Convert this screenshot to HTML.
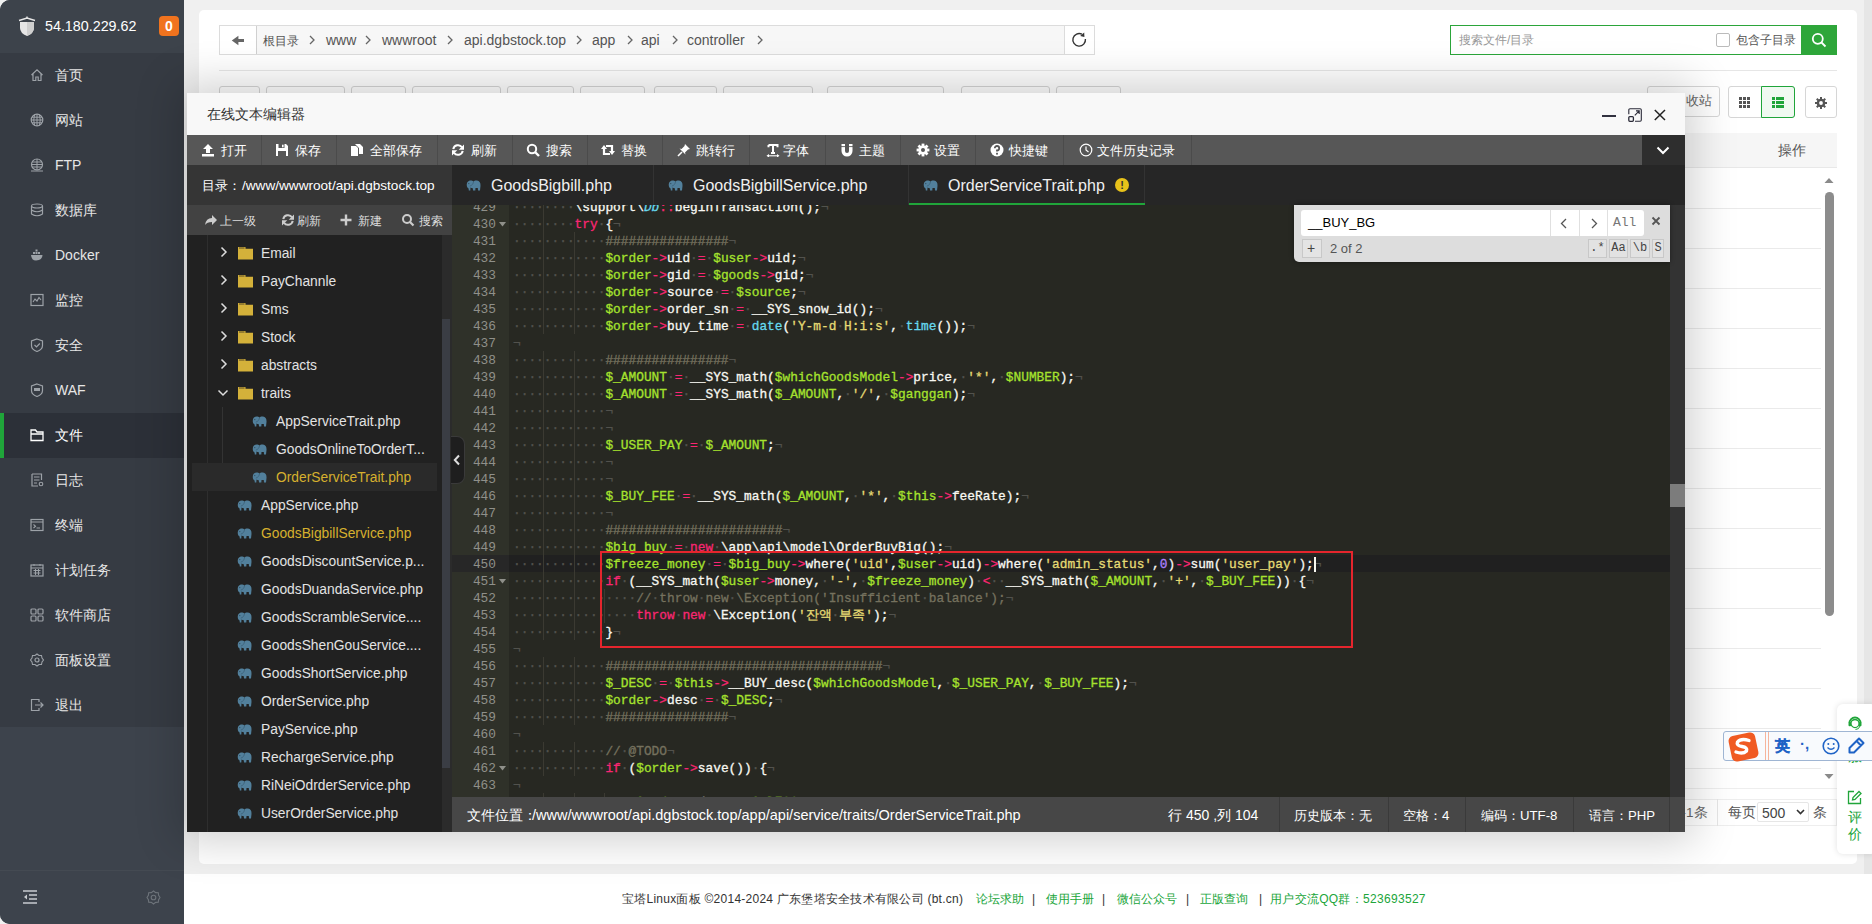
<!DOCTYPE html><html><head><meta charset="utf-8"><style>
*{box-sizing:border-box;margin:0;padding:0}
html,body{width:1872px;height:924px;overflow:hidden;background:#f0f0f0;font-family:"Liberation Sans",sans-serif;}
.a{position:absolute}
.sb{left:0;top:0;width:184px;height:924px;background:#363b43;border-radius:10px 0 0 10px;overflow:hidden}
.sbh{left:0;top:0;width:184px;height:53px;background:#3d434b}
.mi{left:0;width:184px;height:45px;color:#e6e6e6;font-size:14px;line-height:45px}
.mi .t{position:absolute;left:55px;top:0}
.mi svg{position:absolute;left:30px;top:15px}
.mi.act{background:#2c3038;color:#fff}
.mi.act:before{content:"";position:absolute;left:0;top:0;width:4px;height:45px;background:#20a53a}
.card{left:199px;top:10px;width:1658px;height:854px;background:#fff;border-radius:5px}
.btn{border:1px solid #d6d6d6;border-radius:3px;background:#fff}
.dlg{left:187px;top:93px;width:1498px;height:739px;background:#f8f8f8;box-shadow:0 0 40px 10px rgba(0,0,0,0.18)}
.tb{top:42px;left:0;width:1498px;height:30px;background:#575757}
.ti{top:42px;height:30px;color:#fff;font-size:13px;line-height:30px;border-right:1px solid #4b4b4b}
.mono{font-family:"Liberation Mono",monospace}
.cl{position:absolute;left:0;height:17px;line-height:17px;white-space:pre;font-size:12.83px;color:#f8f8f2;-webkit-text-stroke:0.3px}
.gn{position:absolute;left:0;width:57px;height:17px;line-height:17px;text-align:right;padding-right:13px;font-size:12.83px;color:#8f908a}
.k{color:#f92672}.v{color:#a6e22e}.s{color:#e6db74}.f{color:#66d9ef}.n{color:#ae81ff}.c{color:#75715e}
.iv{color:#52524d}
.tr{position:absolute;left:0;width:245px;height:28px;line-height:30px;font-size:13.8px;color:#e3e3e3;white-space:nowrap}
</style></head><body><div class="a sb">
<div class="a sbh"></div>
<svg class="a" style="left:18px;top:16px" width="18" height="20" viewBox="0 0 18 20">
<path d="M2 6 L16 6 L16 12 Q16 17 9 20 Q2 17 2 12 Z" fill="#e6e6e6"/>
<path d="M9 6 L16 6 L16 12 Q16 17 9 20 Z" fill="#cfcfcf"/>
<path d="M1 4.5 L9 2 L17 4.5" stroke="#e6e6e6" stroke-width="1.4" fill="none"/>
<path d="M9 0.5 V2.5" stroke="#e6e6e6" stroke-width="1.4"/>
</svg>
<div class="a" style="left:45px;top:17px;font-size:14.3px;line-height:18px;color:#fff">54.180.229.62</div>
<div class="a" style="left:159px;top:16px;width:20px;height:20px;border-radius:4px;background:#f0731e;color:#fff;font-size:14px;font-weight:bold;line-height:20px;text-align:center">0</div>
<div class="a mi" style="top:53px"><svg width="14" height="14" viewBox="0 0 14 14"><path d="M1.5 7 L7 1.8 L12.5 7 M3 5.8 V12.5 H5.8 V9 H8.2 V12.5 H11 V5.8" stroke="#9da2a8" stroke-width="1.2" fill="none"/></svg><span class="t">首页</span></div>
<div class="a mi" style="top:98px"><svg width="14" height="14" viewBox="0 0 14 14"><circle cx="7" cy="7" r="5.8" stroke="#9da2a8" stroke-width="1.2" fill="none"/><path d="M1.2 7 H12.8 M7 1.2 V12.8 M2 4.2 H12 M2 9.8 H12 M4.5 1.8 Q3 7 4.5 12.2 M9.5 1.8 Q11 7 9.5 12.2" stroke="#9da2a8" stroke-width="1" fill="none"/></svg><span class="t">网站</span></div>
<div class="a mi" style="top:143px"><svg width="14" height="14" viewBox="0 0 14 14"><circle cx="7" cy="6.5" r="5.5" stroke="#9da2a8" stroke-width="1.2" fill="none"/><path d="M1.5 6.5 H12.5 M7 1 V12 M2 4 H12 M2 9 H12 M1 13 H13" stroke="#9da2a8" stroke-width="1" fill="none"/></svg><span class="t">FTP</span></div>
<div class="a mi" style="top:188px"><svg width="14" height="14" viewBox="0 0 14 14"><ellipse cx="7" cy="3" rx="5.5" ry="2" stroke="#9da2a8" stroke-width="1.2" fill="none"/><path d="M1.5 3 V11 Q7 14.5 12.5 11 V3 M1.5 7 Q7 10.5 12.5 7" stroke="#9da2a8" stroke-width="1.2" fill="none"/></svg><span class="t">数据库</span></div>
<div class="a mi" style="top:233px"><svg width="14" height="14" viewBox="0 0 14 14"><path d="M1 7 H12.5 Q12.5 12 6 12.5 Q1.5 12.5 1 7 Z" fill="#9da2a8"/><rect x="3" y="4" width="2" height="2" fill="#9da2a8"/><rect x="5.5" y="4" width="2" height="2" fill="#9da2a8"/><rect x="5.5" y="1.5" width="2" height="2" fill="#9da2a8"/><rect x="8" y="4" width="2" height="2" fill="#9da2a8"/></svg><span class="t">Docker</span></div>
<div class="a mi" style="top:278px"><svg width="14" height="14" viewBox="0 0 14 14"><rect x="1" y="1.5" width="12" height="11" stroke="#9da2a8" stroke-width="1.2" fill="none"/><path d="M3 9 L5 6 L7 8 L9 4.5 L11 7" stroke="#9da2a8" stroke-width="1.1" fill="none"/></svg><span class="t">监控</span></div>
<div class="a mi" style="top:323px"><svg width="14" height="14" viewBox="0 0 14 14"><path d="M7 1 L12.5 3 V7.5 Q12.5 11.5 7 13.5 Q1.5 11.5 1.5 7.5 V3 Z" stroke="#9da2a8" stroke-width="1.2" fill="none"/><path d="M4.5 7 L6.5 9 L9.8 5.5" stroke="#9da2a8" stroke-width="1.2" fill="none"/></svg><span class="t">安全</span></div>
<div class="a mi" style="top:368px"><svg width="14" height="14" viewBox="0 0 14 14"><path d="M7 1 L12.5 3 V7.5 Q12.5 11.5 7 13.5 Q1.5 11.5 1.5 7.5 V3 Z" stroke="#9da2a8" stroke-width="1.2" fill="none"/><path d="M4 5 H10 V8 H4 Z" fill="#9da2a8"/></svg><span class="t">WAF</span></div>
<div class="a mi act" style="top:413px"><svg width="14" height="14" viewBox="0 0 14 14"><path d="M1 2 H5.5 L7 4 H13 V12.5 H1 Z M1 6 H13" stroke="#fff" stroke-width="1.3" fill="none"/></svg><span class="t">文件</span></div>
<div class="a mi" style="top:458px"><svg width="14" height="14" viewBox="0 0 14 14"><path d="M2 1 H11.5 V7 M2 1 V13 H8 M4 4 H9.5 M4 7 H9.5 M4 10 H7" stroke="#9da2a8" stroke-width="1.2" fill="none"/><circle cx="11" cy="11" r="1.8" stroke="#9da2a8" stroke-width="1.1" fill="none"/></svg><span class="t">日志</span></div>
<div class="a mi" style="top:503px"><svg width="14" height="14" viewBox="0 0 14 14"><rect x="1" y="1.5" width="12" height="11" stroke="#9da2a8" stroke-width="1.2" fill="none"/><path d="M1 4 H13 M3.5 6.5 L5.5 8.2 L3.5 10 M6.5 10 H10" stroke="#9da2a8" stroke-width="1.1" fill="none"/></svg><span class="t">终端</span></div>
<div class="a mi" style="top:548px"><svg width="14" height="14" viewBox="0 0 14 14"><rect x="1" y="2" width="12" height="11" stroke="#9da2a8" stroke-width="1.2" fill="none"/><path d="M1 5 H13 M4 1 V3 M10 1 V3 M3.5 7.5 H10.5 M3.5 10 H10.5 M5.5 6 V12 M8.5 6 V12" stroke="#9da2a8" stroke-width="1" fill="none"/></svg><span class="t">计划任务</span></div>
<div class="a mi" style="top:593px"><svg width="14" height="14" viewBox="0 0 14 14"><rect x="1" y="1" width="5" height="5" rx="1" stroke="#9da2a8" stroke-width="1.2" fill="none"/><rect x="8" y="1" width="5" height="5" rx="1" stroke="#9da2a8" stroke-width="1.2" fill="none"/><rect x="1" y="8" width="5" height="5" rx="1" stroke="#9da2a8" stroke-width="1.2" fill="none"/><rect x="8" y="8" width="5" height="5" rx="1" stroke="#9da2a8" stroke-width="1.2" fill="none"/></svg><span class="t">软件商店</span></div>
<div class="a mi" style="top:638px"><svg width="14" height="14" viewBox="0 0 14 14"><circle cx="7" cy="7" r="2" stroke="#9da2a8" stroke-width="1.2" fill="none"/><path d="M7 1 L9 2.5 L11.5 2.5 L12 5 L13.5 7 L12 9 L11.5 11.5 L9 11.5 L7 13 L5 11.5 L2.5 11.5 L2 9 L0.5 7 L2 5 L2.5 2.5 L5 2.5 Z" stroke="#9da2a8" stroke-width="1.1" fill="none"/></svg><span class="t">面板设置</span></div>
<div class="a mi" style="top:683px"><svg width="14" height="14" viewBox="0 0 14 14"><path d="M9 4 V1.5 H1.5 V12.5 H9 V10 M5 7 H13 M10.5 4.5 L13 7 L10.5 9.5" stroke="#9da2a8" stroke-width="1.2" fill="none"/></svg><span class="t">退出</span></div>
<div class="a" style="left:0;top:727px;width:184px;height:197px;background:#3d434c"></div>
<div class="a" style="left:0;top:870px;width:184px;height:1px;background:#444a52"></div>
<svg class="a" style="left:23px;top:890px" width="15" height="14" viewBox="0 0 15 14"><path d="M0 1 H14 M6 5 H14 M6 9 H14 M0 13 H14" stroke="#c8cbcf" stroke-width="1.3"/><path d="M4 4.5 L1 7 L4 9.5 Z" fill="#c8cbcf"/></svg>
<svg class="a" style="left:146px;top:890px" width="15" height="15" viewBox="0 0 15 15"><circle cx="7.5" cy="7.5" r="2.3" stroke="#6d737a" stroke-width="1.1" fill="none"/><path d="M7.5 1 L9.7 2.6 L12.3 2.7 L12.6 5.3 L14 7.5 L12.6 9.7 L12.3 12.3 L9.7 12.4 L7.5 14 L5.3 12.4 L2.7 12.3 L2.4 9.7 L1 7.5 L2.4 5.3 L2.7 2.7 L5.3 2.6 Z" stroke="#6d737a" stroke-width="1.1" fill="none"/></svg>
</div>
<div class="a" style="left:184px;top:874px;width:1688px;height:50px;background:#fff"></div>
<div class="a" style="left:622px;top:891px;font-size:12px;letter-spacing:0.25px;line-height:16px;color:#333;white-space:nowrap">宝塔Linux面板 ©2014-2024 广东堡塔安全技术有限公司 (bt.cn)</div>
<div class="a" style="left:976px;top:891px;font-size:12px;line-height:16px;color:#20a53a;white-space:nowrap">论坛求助</div>
<div class="a" style="left:1032px;top:891px;font-size:12px;line-height:16px;color:#333;white-space:nowrap">|</div>
<div class="a" style="left:1046px;top:891px;font-size:12px;line-height:16px;color:#20a53a;white-space:nowrap">使用手册</div>
<div class="a" style="left:1102px;top:891px;font-size:12px;line-height:16px;color:#333;white-space:nowrap">|</div>
<div class="a" style="left:1117px;top:891px;font-size:12px;line-height:16px;color:#20a53a;white-space:nowrap">微信公众号</div>
<div class="a" style="left:1186px;top:891px;font-size:12px;line-height:16px;color:#333;white-space:nowrap">|</div>
<div class="a" style="left:1200px;top:891px;font-size:12px;line-height:16px;color:#20a53a;white-space:nowrap">正版查询</div>
<div class="a" style="left:1259px;top:891px;font-size:12px;line-height:16px;color:#333;white-space:nowrap">|</div>
<div class="a" style="left:1270px;top:891px;font-size:12px;letter-spacing:0.3px;line-height:16px;color:#20a53a;white-space:nowrap">用户交流QQ群：523693527</div>
<div class="a" style="left:1864px;top:0;width:8px;height:874px;background:#e6e6e6"></div>
<div class="a card"></div>
<div class="a" style="left:219px;top:25px;width:876px;height:30px;border:1px solid #dcdcdc;background:#f7f7f7"></div>
<div class="a" style="left:220px;top:26px;width:37px;height:28px;background:#fff;border-right:1px solid #d0d0d0"></div>
<svg class="a" style="left:231px;top:34px" width="14" height="12" viewBox="0 0 14 12"><path d="M0.8 6.5 L7.4 1.8 V5 H13 V8 H7.4 V11.2 Z" fill="#666"/></svg>
<div class="a" style="left:263px;top:32px;font-size:12px;top:33px;line-height:16px;color:#555;white-space:nowrap">根目录</div>
<div class="a" style="left:326px;top:32px;font-size:14px;line-height:16px;color:#555;white-space:nowrap">www</div>
<div class="a" style="left:382px;top:32px;font-size:14px;line-height:16px;color:#555;white-space:nowrap">wwwroot</div>
<div class="a" style="left:464px;top:32px;font-size:14px;line-height:16px;color:#555;white-space:nowrap">api.dgbstock.top</div>
<div class="a" style="left:592px;top:32px;font-size:14px;line-height:16px;color:#555;white-space:nowrap">app</div>
<div class="a" style="left:641px;top:32px;font-size:14px;line-height:16px;color:#555;white-space:nowrap">api</div>
<div class="a" style="left:687px;top:32px;font-size:14px;line-height:16px;color:#555;white-space:nowrap">controller</div>
<svg class="a" style="left:308.5px;top:35px" width="6" height="10" viewBox="0 0 6 10"><path d="M1 1 L5 5 L1 9" stroke="#666" stroke-width="1.3" fill="none"/></svg>
<svg class="a" style="left:365px;top:35px" width="6" height="10" viewBox="0 0 6 10"><path d="M1 1 L5 5 L1 9" stroke="#666" stroke-width="1.3" fill="none"/></svg>
<svg class="a" style="left:447px;top:35px" width="6" height="10" viewBox="0 0 6 10"><path d="M1 1 L5 5 L1 9" stroke="#666" stroke-width="1.3" fill="none"/></svg>
<svg class="a" style="left:576px;top:35px" width="6" height="10" viewBox="0 0 6 10"><path d="M1 1 L5 5 L1 9" stroke="#666" stroke-width="1.3" fill="none"/></svg>
<svg class="a" style="left:627px;top:35px" width="6" height="10" viewBox="0 0 6 10"><path d="M1 1 L5 5 L1 9" stroke="#666" stroke-width="1.3" fill="none"/></svg>
<svg class="a" style="left:672px;top:35px" width="6" height="10" viewBox="0 0 6 10"><path d="M1 1 L5 5 L1 9" stroke="#666" stroke-width="1.3" fill="none"/></svg>
<svg class="a" style="left:756.5px;top:35px" width="6" height="10" viewBox="0 0 6 10"><path d="M1 1 L5 5 L1 9" stroke="#666" stroke-width="1.3" fill="none"/></svg>
<div class="a" style="left:1064px;top:25px;width:31px;height:30px;border:1px solid #dcdcdc;background:#fff"></div>
<svg class="a" style="left:1071px;top:32px" width="16" height="16" viewBox="0 0 16 16"><path d="M14.4 7 A6.3 6.3 0 1 1 11 2.2" stroke="#333" stroke-width="1.4" fill="none"/><path d="M13.2 0.6 L13.4 5 L9.2 4 Z" fill="#333"/></svg>
<div class="a" style="left:1450px;top:25px;width:353px;height:30px;border:1px solid #2ba53a;background:#fff"></div>
<div class="a" style="left:1459px;top:33px;font-size:12px;line-height:15px;color:#999">搜索文件/目录</div>
<div class="a" style="left:1716px;top:33px;width:14px;height:14px;border:1px solid #bbb;border-radius:2px;background:#fff"></div>
<div class="a" style="left:1736px;top:33px;font-size:12px;line-height:15px;color:#555">包含子目录</div>
<div class="a" style="left:1801px;top:25px;width:36px;height:30px;background:#2ea63a"></div>
<svg class="a" style="left:1811px;top:32px" width="16" height="16" viewBox="0 0 16 16"><circle cx="6.8" cy="6.8" r="5" stroke="#fff" stroke-width="1.8" fill="none"/><path d="M10.5 10.5 L14.5 14.5" stroke="#fff" stroke-width="1.8"/></svg>
<div class="a" style="left:219px;top:70px;width:1618px;height:1px;background:#e6e6e6"></div>
<div class="a btn" style="left:219px;top:86px;width:41px;height:31px"></div>
<div class="a btn" style="left:266px;top:86px;width:79px;height:31px"></div>
<div class="a btn" style="left:351px;top:86px;width:55px;height:31px"></div>
<div class="a btn" style="left:412px;top:86px;width:89px;height:31px"></div>
<div class="a btn" style="left:507px;top:86px;width:67px;height:31px"></div>
<div class="a btn" style="left:580px;top:86px;width:65px;height:31px"></div>
<div class="a btn" style="left:654px;top:86px;width:63px;height:31px"></div>
<div class="a btn" style="left:723px;top:86px;width:90px;height:31px"></div>
<div class="a btn" style="left:827px;top:86px;width:117px;height:31px"></div>
<div class="a btn" style="left:961px;top:86px;width:89px;height:31px"></div>
<div class="a btn" style="left:1056px;top:86px;width:65px;height:31px"></div>
<div class="a btn" style="left:1647px;top:86px;width:73px;height:31px"></div>
<div class="a" style="left:1686px;top:93px;font-size:13px;line-height:16px;color:#666">收站</div>
<div class="a btn" style="left:1728px;top:86px;width:67px;height:32px"></div>
<div class="a" style="left:1761px;top:86px;width:34px;height:32px;border:1px solid #20a53a;background:#f0f9f1;border-radius:0 3px 3px 0"></div>
<svg class="a" style="left:1739px;top:97px" width="11" height="11" viewBox="0 0 11 11"><g fill="#555"><rect x="0" y="0" width="3" height="3"/><rect x="4" y="0" width="3" height="3"/><rect x="8" y="0" width="3" height="3"/><rect x="0" y="4" width="3" height="3"/><rect x="4" y="4" width="3" height="3"/><rect x="8" y="4" width="3" height="3"/><rect x="0" y="8" width="3" height="3"/><rect x="4" y="8" width="3" height="3"/><rect x="8" y="8" width="3" height="3"/></g></svg>
<svg class="a" style="left:1772px;top:97px" width="12" height="11" viewBox="0 0 12 11"><g fill="#20a53a"><rect x="0" y="0" width="3" height="3"/><rect x="4" y="0" width="8" height="3"/><rect x="0" y="4" width="3" height="3"/><rect x="4" y="4" width="8" height="3"/><rect x="0" y="8" width="3" height="3"/><rect x="4" y="8" width="8" height="3"/></g></svg>
<div class="a btn" style="left:1805px;top:86px;width:32px;height:32px"></div>
<svg class="a" style="left:1815px;top:97px" width="12" height="12" viewBox="0 0 12 12"><g fill="#555"><circle cx="6" cy="6" r="4.3"/><rect x="5" y="0" width="2" height="12"/><rect x="0" y="5" width="12" height="2"/><rect x="5" y="0" width="2" height="12" transform="rotate(45 6 6)"/><rect x="5" y="0" width="2" height="12" transform="rotate(-45 6 6)"/></g><circle cx="6" cy="6" r="1.9" fill="#fff"/></svg>
<div class="a" style="left:219px;top:133px;width:1618px;height:35px;background:#f6f6f6;border-bottom:1px solid #e8e8e8"></div>
<div class="a" style="left:1778px;top:143px;font-size:13.5px;line-height:16px;color:#555">操作</div>
<div class="a" style="left:219px;top:208px;width:1602px;height:1px;background:#eaeaea"></div>
<div class="a" style="left:219px;top:248px;width:1602px;height:1px;background:#eaeaea"></div>
<div class="a" style="left:219px;top:288px;width:1602px;height:1px;background:#eaeaea"></div>
<div class="a" style="left:219px;top:328px;width:1602px;height:1px;background:#eaeaea"></div>
<div class="a" style="left:219px;top:368px;width:1602px;height:1px;background:#eaeaea"></div>
<div class="a" style="left:219px;top:408px;width:1602px;height:1px;background:#eaeaea"></div>
<div class="a" style="left:219px;top:448px;width:1602px;height:1px;background:#eaeaea"></div>
<div class="a" style="left:219px;top:488px;width:1602px;height:1px;background:#eaeaea"></div>
<div class="a" style="left:219px;top:528px;width:1602px;height:1px;background:#eaeaea"></div>
<div class="a" style="left:219px;top:568px;width:1602px;height:1px;background:#eaeaea"></div>
<div class="a" style="left:219px;top:608px;width:1602px;height:1px;background:#eaeaea"></div>
<div class="a" style="left:219px;top:648px;width:1602px;height:1px;background:#eaeaea"></div>
<div class="a" style="left:219px;top:688px;width:1602px;height:1px;background:#eaeaea"></div>
<div class="a" style="left:219px;top:728px;width:1602px;height:1px;background:#eaeaea"></div>
<div class="a" style="left:219px;top:768px;width:1602px;height:1px;background:#eaeaea"></div>
<svg class="a" style="left:1823px;top:176px" width="12" height="8" viewBox="0 0 12 8"><path d="M1.5 7 L6 2 L10.5 7 Z" fill="#8a8a8a"/></svg>
<div class="a" style="left:1825px;top:192px;width:9px;height:424px;border-radius:5px;background:#8c8c8c"></div>
<svg class="a" style="left:1823px;top:773px" width="12" height="8" viewBox="0 0 12 8"><path d="M1.5 1 L6 6 L10.5 1 Z" fill="#8a8a8a"/></svg>
<div class="a" style="left:219px;top:788px;width:1618px;height:1px;background:#eee"></div>
<div class="a" style="left:1680px;top:799px;width:157px;height:27px;border:1px solid #eee;border-left:none"></div>
<div class="a" style="left:1717px;top:799px;width:1px;height:27px;background:#e6e6e6"></div>
<div class="a" style="left:1672px;top:805px;font-size:13.5px;line-height:16px;color:#666;white-space:nowrap">共1条</div>
<div class="a" style="left:1728px;top:805px;font-size:13.5px;line-height:16px;color:#555">每页</div>
<div class="a" style="left:1757px;top:802px;width:52px;height:20px;border:1px solid #e6e6e6;border-radius:2px;background:#fff"></div>
<div class="a" style="left:1762px;top:805px;font-size:14px;line-height:16px;color:#444">500</div>
<svg class="a" style="left:1796px;top:809px" width="9" height="6" viewBox="0 0 9 6"><path d="M1 1 L4.5 4.5 L8 1" stroke="#333" stroke-width="1.6" fill="none"/></svg>
<div class="a" style="left:1813px;top:805px;font-size:13.5px;line-height:16px;color:#555">条</div>
<div class="a dlg">
<div class="a" style="left:20px;top:12px;font-size:14px;line-height:18px;color:#333">在线文本编辑器</div>
<svg class="a" style="left:1414px;top:14px" width="66" height="16" viewBox="0 0 66 16"><path d="M1 9 H15" stroke="#1a1a2a" stroke-width="1.8"/><path d="M27.8 7.2 V3 Q27.8 1.8 29 1.8 H39.1 Q40.3 1.8 40.3 3 V13.1 Q40.3 14.3 39.1 14.3 H34" stroke="#2a2a38" stroke-width="1.1" fill="none"/><rect x="27.8" y="9.6" width="4.6" height="4.7" rx="1" stroke="#2a2a38" stroke-width="1.3" fill="none"/><path d="M33.8 8.3 L38 4.1 M35 3.9 H38.2 V7.1" stroke="#2a2a38" stroke-width="1.1" fill="none"/><path d="M53.8 3 L64 13 M64 3 L53.8 13" stroke="#222" stroke-width="1.5"/></svg>
<div class="a tb"></div>
<div class="a" style="left:1455px;top:42px;width:43px;height:30px;background:#2e2e2e"></div>
<svg class="a" style="left:1469px;top:53px" width="14" height="9" viewBox="0 0 14 9"><path d="M1.5 1.5 L7 7 L12.5 1.5" stroke="#fff" stroke-width="2" fill="none"/></svg>
<div class="a ti" style="left:0px;width:75px"><svg class="a" style="left:14px;top:8px" width="14" height="14" viewBox="0 0 14 14"><path d="M7 1 L12 6 H9 V10 H5 V6 H2 Z" fill="#fff"/><rect x="1" y="11" width="12" height="2.5" fill="#fff"/></svg><span class="a" style="left:34px;top:1px">打开</span></div>
<div class="a ti" style="left:74px;width:76px"><svg class="a" style="left:14px;top:8px" width="14" height="14" viewBox="0 0 14 14"><path d="M1 1 H11 L13 3 V13 H1 Z" fill="#fff"/><rect x="3.5" y="1" width="6" height="4" fill="#575757"/><rect x="7" y="1.7" width="1.6" height="2.6" fill="#fff"/><rect x="3" y="8" width="8" height="5" fill="#575757"/></svg><span class="a" style="left:34px;top:1px">保存</span></div>
<div class="a ti" style="left:149px;width:102px"><svg class="a" style="left:14px;top:8px" width="14" height="14" viewBox="0 0 14 14"><path d="M1 3 H6 L8 5 V13 H1 Z" fill="#fff"/><path d="M5 1 H10 L13 4 V11 H9 V5 L6.5 2.5 Z" fill="#fff"/></svg><span class="a" style="left:34px;top:1px">全部保存</span></div>
<div class="a ti" style="left:250px;width:76px"><svg class="a" style="left:14px;top:8px" width="14" height="14" viewBox="0 0 14 14"><path d="M2.3 6.2 A4.8 4.8 0 0 1 11 4.3 M11.7 7.8 A4.8 4.8 0 0 1 3 9.7" stroke="#fff" stroke-width="2" fill="none"/><path d="M13 1.5 V6.8 H7.7 Z M1 12.5 V7.2 H6.3 Z" fill="#fff"/></svg><span class="a" style="left:34px;top:1px">刷新</span></div>
<div class="a ti" style="left:325px;width:76px"><svg class="a" style="left:14px;top:8px" width="14" height="14" viewBox="0 0 14 14"><circle cx="6" cy="6" r="4.2" stroke="#fff" stroke-width="2" fill="none"/><path d="M9 9 L13 13" stroke="#fff" stroke-width="2.4"/></svg><span class="a" style="left:34px;top:1px">搜索</span></div>
<div class="a ti" style="left:400px;width:76px"><svg class="a" style="left:14px;top:8px" width="14" height="14" viewBox="0 0 14 14"><path d="M3 5 V11 H9 M11 9 V3 H5" stroke="#fff" stroke-width="2.2" fill="none"/><path d="M0 6 L3 2 L6 6 Z M8 8 L11 12 L14 8 Z" fill="#fff"/></svg><span class="a" style="left:34px;top:1px">替换</span></div>
<div class="a ti" style="left:475px;width:88px"><svg class="a" style="left:15px;top:8px" width="14" height="14" viewBox="0 0 14 14"><path d="M8 1 L13 6 L11 6.5 L8 9.5 L8.5 11.5 L2.5 5.5 L4.5 6 L7.5 3 Z" fill="#fff"/><path d="M5 9 L1 13" stroke="#fff" stroke-width="1.6"/></svg><span class="a" style="left:34px;top:1px">跳转行</span></div>
<div class="a ti" style="left:562px;width:77px"><svg class="a" style="left:17px;top:8px" width="14" height="14" viewBox="0 0 14 14"><path d="M2.5 2 H11.5 V4.2 M2.5 2 V4.2 M7 2 V10 M5 10 H9" stroke="#fff" stroke-width="2" fill="none"/><path d="M2.5 12.8 H11.5" stroke="#fff" stroke-width="1.1"/><path d="M0.5 12.8 L3 11 V14.6 Z M13.5 12.8 L11 11 V14.6 Z" fill="#fff"/></svg><span class="a" style="left:34px;top:1px">字体</span></div>
<div class="a ti" style="left:638px;width:76px"><svg class="a" style="left:15px;top:8px" width="14" height="14" viewBox="0 0 14 14"><path d="M1.5 1 H5 V8 A2 2 0 0 0 9 8 V1 H12.5 V8 A5.5 5.5 0 0 1 1.5 8 Z" fill="#fff"/><path d="M1 3.6 H5.5 M8.5 3.6 H13" stroke="#575757" stroke-width="0.9"/></svg><span class="a" style="left:34px;top:1px">主题</span></div>
<div class="a ti" style="left:713px;width:76px"><svg class="a" style="left:16px;top:8px" width="14" height="14" viewBox="0 0 14 14"><g fill="#fff"><circle cx="7" cy="7" r="4.6"/><rect x="5.6" y="0.6" width="2.8" height="12.8"/><rect x="0.6" y="5.6" width="12.8" height="2.8"/><rect x="5.6" y="0.6" width="2.8" height="12.8" transform="rotate(45 7 7)"/><rect x="5.6" y="0.6" width="2.8" height="12.8" transform="rotate(-45 7 7)"/></g><circle cx="7" cy="7" r="2" fill="#575757"/></svg><span class="a" style="left:34px;top:1px">设置</span></div>
<div class="a ti" style="left:788px;width:89px"><svg class="a" style="left:15px;top:8px" width="14" height="14" viewBox="0 0 14 14"><circle cx="7" cy="7" r="6.5" fill="#fff"/><path d="M4.8 5.2 A2.2 2.2 0 1 1 7 7.4 V8.6" stroke="#575757" stroke-width="1.8" fill="none"/><rect x="6.1" y="9.8" width="1.8" height="1.8" fill="#575757"/></svg><span class="a" style="left:34px;top:1px">快捷键</span></div>
<div class="a ti" style="left:876px;width:129px"><svg class="a" style="left:16px;top:8px" width="14" height="14" viewBox="0 0 14 14"><circle cx="7" cy="7" r="5.8" stroke="#fff" stroke-width="1.2" fill="none"/><path d="M7 3.5 V7 L9.5 9" stroke="#fff" stroke-width="1.2" fill="none"/></svg><span class="a" style="left:34px;top:1px">文件历史记录</span></div>
<div class="a" style="left:0;top:72px;width:265px;height:40px;background:#353535"></div>
<div class="a" style="left:15px;top:85px;font-size:12.5px;line-height:16px;color:#fff;white-space:nowrap">目录：</div>
<div class="a" style="left:55px;top:85px;font-size:13.6px;line-height:16px;color:#fff;white-space:nowrap">/www/wwwroot/api.dgbstock.top</div>
<div class="a" style="left:0;top:112px;width:265px;height:30px;background:#424242"></div>
<svg class="a" style="left:17px;top:120px" width="14" height="14" viewBox="0 0 14 14"><path d="M1 12 Q2 5 8 5 V2 L13 7 L8 12 V9 Q3 9 1 12 Z" fill="#ccc"/></svg>
<div class="a" style="left:33px;top:120px;font-size:12px;line-height:16px;color:#ddd">上一级</div>
<svg class="a" style="left:94px;top:120px" width="14" height="14" viewBox="0 0 14 14"><path d="M2.3 6.2 A4.8 4.8 0 0 1 11 4.3 M11.7 7.8 A4.8 4.8 0 0 1 3 9.7" stroke="#ccc" stroke-width="2" fill="none"/><path d="M13 1.5 V6.8 H7.7 Z M1 12.5 V7.2 H6.3 Z" fill="#ccc"/></svg>
<div class="a" style="left:110px;top:120px;font-size:12px;line-height:16px;color:#ddd">刷新</div>
<svg class="a" style="left:152px;top:120px" width="14" height="14" viewBox="0 0 14 14"><path d="M7 1.5 V12.5 M1.5 7 H12.5" stroke="#ccc" stroke-width="2.4"/></svg>
<div class="a" style="left:171px;top:120px;font-size:12px;line-height:16px;color:#ddd">新建</div>
<svg class="a" style="left:214px;top:120px" width="14" height="14" viewBox="0 0 14 14"><circle cx="6" cy="6" r="4" stroke="#ccc" stroke-width="2" fill="none"/><path d="M9 9 L12.5 12.5" stroke="#ccc" stroke-width="2.2"/></svg>
<div class="a" style="left:232px;top:120px;font-size:12px;line-height:16px;color:#ddd">搜索</div>
<div class="a" style="left:0;top:142px;width:265px;height:597px;background:#212121;overflow:hidden">
<div class="a" style="left:20px;top:0;width:1px;height:597px;background:#2e2e2e"></div>
<div class="a" style="left:35px;top:172px;width:1px;height:84px;background:#333"></div>
<svg class="a" style="left:33px;top:11px" width="8" height="12" viewBox="0 0 8 12"><path d="M1.5 1.5 L6 6 L1.5 10.5" stroke="#ddd" stroke-width="1.5" fill="none"/></svg>
<svg class="a" style="left:51px;top:12px" width="15" height="13" viewBox="0 0 15 13"><path d="M0 0 H7.5 V1.8 H15 V12.5 H0 Z" fill="#d4b13a"/><path d="M1 1 H6.5" stroke="#3a3020" stroke-width="0.8"/></svg>
<div class="tr" style="left:74px;top:4px">Email</div>
<svg class="a" style="left:33px;top:39px" width="8" height="12" viewBox="0 0 8 12"><path d="M1.5 1.5 L6 6 L1.5 10.5" stroke="#ddd" stroke-width="1.5" fill="none"/></svg>
<svg class="a" style="left:51px;top:40px" width="15" height="13" viewBox="0 0 15 13"><path d="M0 0 H7.5 V1.8 H15 V12.5 H0 Z" fill="#d4b13a"/><path d="M1 1 H6.5" stroke="#3a3020" stroke-width="0.8"/></svg>
<div class="tr" style="left:74px;top:32px">PayChannle</div>
<svg class="a" style="left:33px;top:67px" width="8" height="12" viewBox="0 0 8 12"><path d="M1.5 1.5 L6 6 L1.5 10.5" stroke="#ddd" stroke-width="1.5" fill="none"/></svg>
<svg class="a" style="left:51px;top:68px" width="15" height="13" viewBox="0 0 15 13"><path d="M0 0 H7.5 V1.8 H15 V12.5 H0 Z" fill="#d4b13a"/><path d="M1 1 H6.5" stroke="#3a3020" stroke-width="0.8"/></svg>
<div class="tr" style="left:74px;top:60px">Sms</div>
<svg class="a" style="left:33px;top:95px" width="8" height="12" viewBox="0 0 8 12"><path d="M1.5 1.5 L6 6 L1.5 10.5" stroke="#ddd" stroke-width="1.5" fill="none"/></svg>
<svg class="a" style="left:51px;top:96px" width="15" height="13" viewBox="0 0 15 13"><path d="M0 0 H7.5 V1.8 H15 V12.5 H0 Z" fill="#d4b13a"/><path d="M1 1 H6.5" stroke="#3a3020" stroke-width="0.8"/></svg>
<div class="tr" style="left:74px;top:88px">Stock</div>
<svg class="a" style="left:33px;top:123px" width="8" height="12" viewBox="0 0 8 12"><path d="M1.5 1.5 L6 6 L1.5 10.5" stroke="#ddd" stroke-width="1.5" fill="none"/></svg>
<svg class="a" style="left:51px;top:124px" width="15" height="13" viewBox="0 0 15 13"><path d="M0 0 H7.5 V1.8 H15 V12.5 H0 Z" fill="#d4b13a"/><path d="M1 1 H6.5" stroke="#3a3020" stroke-width="0.8"/></svg>
<div class="tr" style="left:74px;top:116px">abstracts</div>
<svg class="a" style="left:29.5px;top:154px" width="12" height="8" viewBox="0 0 12 8"><path d="M1.5 1.5 L6 6 L10.5 1.5" stroke="#ddd" stroke-width="1.5" fill="none"/></svg>
<svg class="a" style="left:51px;top:152px" width="15" height="13" viewBox="0 0 15 13"><path d="M0 0 H7.5 V1.8 H15 V12.5 H0 Z" fill="#d4b13a"/><path d="M1 1 H6.5" stroke="#3a3020" stroke-width="0.8"/></svg>
<div class="tr" style="left:74px;top:144px">traits</div>
<svg class="a" style="left:65px;top:181px" width="15" height="11" viewBox="0 0 15 11"><path d="M0.8 5.5 C0.5 1.5 3 0.2 5.5 0.5 C6.5 0.6 7.2 1.2 7.5 1.8 C8 0.8 9.5 0.3 11 0.6 C13.5 1 14.8 3 14.5 6 L14 10.5 H12 L11.8 8 H9.5 L9.3 10.5 H7 L6.8 8.2 C5.8 8.2 5 8 4.5 7.5 L4.3 10.5 H2.8 L2.6 8.5 C1.5 7.8 0.9 6.8 0.8 5.5 Z" fill="#52809c"/><path d="M7.5 1.8 C7.2 3.8 6.2 5.3 3.8 6.2" stroke="#3b6077" stroke-width="0.8" fill="none"/><circle cx="2.8" cy="3.6" r="0.6" fill="#2d4455"/></svg>
<div class="tr" style="left:89px;top:172px;color:#e3e3e3">AppServiceTrait.php</div>
<svg class="a" style="left:65px;top:209px" width="15" height="11" viewBox="0 0 15 11"><path d="M0.8 5.5 C0.5 1.5 3 0.2 5.5 0.5 C6.5 0.6 7.2 1.2 7.5 1.8 C8 0.8 9.5 0.3 11 0.6 C13.5 1 14.8 3 14.5 6 L14 10.5 H12 L11.8 8 H9.5 L9.3 10.5 H7 L6.8 8.2 C5.8 8.2 5 8 4.5 7.5 L4.3 10.5 H2.8 L2.6 8.5 C1.5 7.8 0.9 6.8 0.8 5.5 Z" fill="#52809c"/><path d="M7.5 1.8 C7.2 3.8 6.2 5.3 3.8 6.2" stroke="#3b6077" stroke-width="0.8" fill="none"/><circle cx="2.8" cy="3.6" r="0.6" fill="#2d4455"/></svg>
<div class="tr" style="left:89px;top:200px;color:#e3e3e3">GoodsOnlineToOrderT...</div>
<div class="a" style="left:5px;top:228px;width:245px;height:28px;background:#2a2a2a"></div>
<svg class="a" style="left:65px;top:237px" width="15" height="11" viewBox="0 0 15 11"><path d="M0.8 5.5 C0.5 1.5 3 0.2 5.5 0.5 C6.5 0.6 7.2 1.2 7.5 1.8 C8 0.8 9.5 0.3 11 0.6 C13.5 1 14.8 3 14.5 6 L14 10.5 H12 L11.8 8 H9.5 L9.3 10.5 H7 L6.8 8.2 C5.8 8.2 5 8 4.5 7.5 L4.3 10.5 H2.8 L2.6 8.5 C1.5 7.8 0.9 6.8 0.8 5.5 Z" fill="#52809c"/><path d="M7.5 1.8 C7.2 3.8 6.2 5.3 3.8 6.2" stroke="#3b6077" stroke-width="0.8" fill="none"/><circle cx="2.8" cy="3.6" r="0.6" fill="#2d4455"/></svg>
<div class="tr" style="left:89px;top:228px;color:#d6b02e">OrderServiceTrait.php</div>
<svg class="a" style="left:50px;top:265px" width="15" height="11" viewBox="0 0 15 11"><path d="M0.8 5.5 C0.5 1.5 3 0.2 5.5 0.5 C6.5 0.6 7.2 1.2 7.5 1.8 C8 0.8 9.5 0.3 11 0.6 C13.5 1 14.8 3 14.5 6 L14 10.5 H12 L11.8 8 H9.5 L9.3 10.5 H7 L6.8 8.2 C5.8 8.2 5 8 4.5 7.5 L4.3 10.5 H2.8 L2.6 8.5 C1.5 7.8 0.9 6.8 0.8 5.5 Z" fill="#52809c"/><path d="M7.5 1.8 C7.2 3.8 6.2 5.3 3.8 6.2" stroke="#3b6077" stroke-width="0.8" fill="none"/><circle cx="2.8" cy="3.6" r="0.6" fill="#2d4455"/></svg>
<div class="tr" style="left:74px;top:256px;color:#e3e3e3">AppService.php</div>
<svg class="a" style="left:50px;top:293px" width="15" height="11" viewBox="0 0 15 11"><path d="M0.8 5.5 C0.5 1.5 3 0.2 5.5 0.5 C6.5 0.6 7.2 1.2 7.5 1.8 C8 0.8 9.5 0.3 11 0.6 C13.5 1 14.8 3 14.5 6 L14 10.5 H12 L11.8 8 H9.5 L9.3 10.5 H7 L6.8 8.2 C5.8 8.2 5 8 4.5 7.5 L4.3 10.5 H2.8 L2.6 8.5 C1.5 7.8 0.9 6.8 0.8 5.5 Z" fill="#52809c"/><path d="M7.5 1.8 C7.2 3.8 6.2 5.3 3.8 6.2" stroke="#3b6077" stroke-width="0.8" fill="none"/><circle cx="2.8" cy="3.6" r="0.6" fill="#2d4455"/></svg>
<div class="tr" style="left:74px;top:284px;color:#d6b02e">GoodsBigbillService.php</div>
<svg class="a" style="left:50px;top:321px" width="15" height="11" viewBox="0 0 15 11"><path d="M0.8 5.5 C0.5 1.5 3 0.2 5.5 0.5 C6.5 0.6 7.2 1.2 7.5 1.8 C8 0.8 9.5 0.3 11 0.6 C13.5 1 14.8 3 14.5 6 L14 10.5 H12 L11.8 8 H9.5 L9.3 10.5 H7 L6.8 8.2 C5.8 8.2 5 8 4.5 7.5 L4.3 10.5 H2.8 L2.6 8.5 C1.5 7.8 0.9 6.8 0.8 5.5 Z" fill="#52809c"/><path d="M7.5 1.8 C7.2 3.8 6.2 5.3 3.8 6.2" stroke="#3b6077" stroke-width="0.8" fill="none"/><circle cx="2.8" cy="3.6" r="0.6" fill="#2d4455"/></svg>
<div class="tr" style="left:74px;top:312px;color:#e3e3e3">GoodsDiscountService.p...</div>
<svg class="a" style="left:50px;top:349px" width="15" height="11" viewBox="0 0 15 11"><path d="M0.8 5.5 C0.5 1.5 3 0.2 5.5 0.5 C6.5 0.6 7.2 1.2 7.5 1.8 C8 0.8 9.5 0.3 11 0.6 C13.5 1 14.8 3 14.5 6 L14 10.5 H12 L11.8 8 H9.5 L9.3 10.5 H7 L6.8 8.2 C5.8 8.2 5 8 4.5 7.5 L4.3 10.5 H2.8 L2.6 8.5 C1.5 7.8 0.9 6.8 0.8 5.5 Z" fill="#52809c"/><path d="M7.5 1.8 C7.2 3.8 6.2 5.3 3.8 6.2" stroke="#3b6077" stroke-width="0.8" fill="none"/><circle cx="2.8" cy="3.6" r="0.6" fill="#2d4455"/></svg>
<div class="tr" style="left:74px;top:340px;color:#e3e3e3">GoodsDuandaService.php</div>
<svg class="a" style="left:50px;top:377px" width="15" height="11" viewBox="0 0 15 11"><path d="M0.8 5.5 C0.5 1.5 3 0.2 5.5 0.5 C6.5 0.6 7.2 1.2 7.5 1.8 C8 0.8 9.5 0.3 11 0.6 C13.5 1 14.8 3 14.5 6 L14 10.5 H12 L11.8 8 H9.5 L9.3 10.5 H7 L6.8 8.2 C5.8 8.2 5 8 4.5 7.5 L4.3 10.5 H2.8 L2.6 8.5 C1.5 7.8 0.9 6.8 0.8 5.5 Z" fill="#52809c"/><path d="M7.5 1.8 C7.2 3.8 6.2 5.3 3.8 6.2" stroke="#3b6077" stroke-width="0.8" fill="none"/><circle cx="2.8" cy="3.6" r="0.6" fill="#2d4455"/></svg>
<div class="tr" style="left:74px;top:368px;color:#e3e3e3">GoodsScrambleService....</div>
<svg class="a" style="left:50px;top:405px" width="15" height="11" viewBox="0 0 15 11"><path d="M0.8 5.5 C0.5 1.5 3 0.2 5.5 0.5 C6.5 0.6 7.2 1.2 7.5 1.8 C8 0.8 9.5 0.3 11 0.6 C13.5 1 14.8 3 14.5 6 L14 10.5 H12 L11.8 8 H9.5 L9.3 10.5 H7 L6.8 8.2 C5.8 8.2 5 8 4.5 7.5 L4.3 10.5 H2.8 L2.6 8.5 C1.5 7.8 0.9 6.8 0.8 5.5 Z" fill="#52809c"/><path d="M7.5 1.8 C7.2 3.8 6.2 5.3 3.8 6.2" stroke="#3b6077" stroke-width="0.8" fill="none"/><circle cx="2.8" cy="3.6" r="0.6" fill="#2d4455"/></svg>
<div class="tr" style="left:74px;top:396px;color:#e3e3e3">GoodsShenGouService....</div>
<svg class="a" style="left:50px;top:433px" width="15" height="11" viewBox="0 0 15 11"><path d="M0.8 5.5 C0.5 1.5 3 0.2 5.5 0.5 C6.5 0.6 7.2 1.2 7.5 1.8 C8 0.8 9.5 0.3 11 0.6 C13.5 1 14.8 3 14.5 6 L14 10.5 H12 L11.8 8 H9.5 L9.3 10.5 H7 L6.8 8.2 C5.8 8.2 5 8 4.5 7.5 L4.3 10.5 H2.8 L2.6 8.5 C1.5 7.8 0.9 6.8 0.8 5.5 Z" fill="#52809c"/><path d="M7.5 1.8 C7.2 3.8 6.2 5.3 3.8 6.2" stroke="#3b6077" stroke-width="0.8" fill="none"/><circle cx="2.8" cy="3.6" r="0.6" fill="#2d4455"/></svg>
<div class="tr" style="left:74px;top:424px;color:#e3e3e3">GoodsShortService.php</div>
<svg class="a" style="left:50px;top:461px" width="15" height="11" viewBox="0 0 15 11"><path d="M0.8 5.5 C0.5 1.5 3 0.2 5.5 0.5 C6.5 0.6 7.2 1.2 7.5 1.8 C8 0.8 9.5 0.3 11 0.6 C13.5 1 14.8 3 14.5 6 L14 10.5 H12 L11.8 8 H9.5 L9.3 10.5 H7 L6.8 8.2 C5.8 8.2 5 8 4.5 7.5 L4.3 10.5 H2.8 L2.6 8.5 C1.5 7.8 0.9 6.8 0.8 5.5 Z" fill="#52809c"/><path d="M7.5 1.8 C7.2 3.8 6.2 5.3 3.8 6.2" stroke="#3b6077" stroke-width="0.8" fill="none"/><circle cx="2.8" cy="3.6" r="0.6" fill="#2d4455"/></svg>
<div class="tr" style="left:74px;top:452px;color:#e3e3e3">OrderService.php</div>
<svg class="a" style="left:50px;top:489px" width="15" height="11" viewBox="0 0 15 11"><path d="M0.8 5.5 C0.5 1.5 3 0.2 5.5 0.5 C6.5 0.6 7.2 1.2 7.5 1.8 C8 0.8 9.5 0.3 11 0.6 C13.5 1 14.8 3 14.5 6 L14 10.5 H12 L11.8 8 H9.5 L9.3 10.5 H7 L6.8 8.2 C5.8 8.2 5 8 4.5 7.5 L4.3 10.5 H2.8 L2.6 8.5 C1.5 7.8 0.9 6.8 0.8 5.5 Z" fill="#52809c"/><path d="M7.5 1.8 C7.2 3.8 6.2 5.3 3.8 6.2" stroke="#3b6077" stroke-width="0.8" fill="none"/><circle cx="2.8" cy="3.6" r="0.6" fill="#2d4455"/></svg>
<div class="tr" style="left:74px;top:480px;color:#e3e3e3">PayService.php</div>
<svg class="a" style="left:50px;top:517px" width="15" height="11" viewBox="0 0 15 11"><path d="M0.8 5.5 C0.5 1.5 3 0.2 5.5 0.5 C6.5 0.6 7.2 1.2 7.5 1.8 C8 0.8 9.5 0.3 11 0.6 C13.5 1 14.8 3 14.5 6 L14 10.5 H12 L11.8 8 H9.5 L9.3 10.5 H7 L6.8 8.2 C5.8 8.2 5 8 4.5 7.5 L4.3 10.5 H2.8 L2.6 8.5 C1.5 7.8 0.9 6.8 0.8 5.5 Z" fill="#52809c"/><path d="M7.5 1.8 C7.2 3.8 6.2 5.3 3.8 6.2" stroke="#3b6077" stroke-width="0.8" fill="none"/><circle cx="2.8" cy="3.6" r="0.6" fill="#2d4455"/></svg>
<div class="tr" style="left:74px;top:508px;color:#e3e3e3">RechargeService.php</div>
<svg class="a" style="left:50px;top:545px" width="15" height="11" viewBox="0 0 15 11"><path d="M0.8 5.5 C0.5 1.5 3 0.2 5.5 0.5 C6.5 0.6 7.2 1.2 7.5 1.8 C8 0.8 9.5 0.3 11 0.6 C13.5 1 14.8 3 14.5 6 L14 10.5 H12 L11.8 8 H9.5 L9.3 10.5 H7 L6.8 8.2 C5.8 8.2 5 8 4.5 7.5 L4.3 10.5 H2.8 L2.6 8.5 C1.5 7.8 0.9 6.8 0.8 5.5 Z" fill="#52809c"/><path d="M7.5 1.8 C7.2 3.8 6.2 5.3 3.8 6.2" stroke="#3b6077" stroke-width="0.8" fill="none"/><circle cx="2.8" cy="3.6" r="0.6" fill="#2d4455"/></svg>
<div class="tr" style="left:74px;top:536px;color:#e3e3e3">RiNeiOdrderService.php</div>
<svg class="a" style="left:50px;top:573px" width="15" height="11" viewBox="0 0 15 11"><path d="M0.8 5.5 C0.5 1.5 3 0.2 5.5 0.5 C6.5 0.6 7.2 1.2 7.5 1.8 C8 0.8 9.5 0.3 11 0.6 C13.5 1 14.8 3 14.5 6 L14 10.5 H12 L11.8 8 H9.5 L9.3 10.5 H7 L6.8 8.2 C5.8 8.2 5 8 4.5 7.5 L4.3 10.5 H2.8 L2.6 8.5 C1.5 7.8 0.9 6.8 0.8 5.5 Z" fill="#52809c"/><path d="M7.5 1.8 C7.2 3.8 6.2 5.3 3.8 6.2" stroke="#3b6077" stroke-width="0.8" fill="none"/><circle cx="2.8" cy="3.6" r="0.6" fill="#2d4455"/></svg>
<div class="tr" style="left:74px;top:564px;color:#e3e3e3">UserOrderService.php</div>
<div class="a" style="left:255px;top:0;width:10px;height:597px;background:#2b2b2b"></div>
<div class="a" style="left:255px;top:84px;width:8px;height:449px;background:#3a3d44"></div>
</div>
<div class="a" style="left:265px;top:72px;width:1233px;height:40px;background:#262626"></div>
<div class="a" style="left:265px;top:72px;width:202px;height:40px;border-right:1px solid #333"></div>
<svg class="a" style="left:279px;top:87px" width="15" height="11" viewBox="0 0 15 11"><path d="M0.8 5.5 C0.5 1.5 3 0.2 5.5 0.5 C6.5 0.6 7.2 1.2 7.5 1.8 C8 0.8 9.5 0.3 11 0.6 C13.5 1 14.8 3 14.5 6 L14 10.5 H12 L11.8 8 H9.5 L9.3 10.5 H7 L6.8 8.2 C5.8 8.2 5 8 4.5 7.5 L4.3 10.5 H2.8 L2.6 8.5 C1.5 7.8 0.9 6.8 0.8 5.5 Z" fill="#52809c"/><path d="M7.5 1.8 C7.2 3.8 6.2 5.3 3.8 6.2" stroke="#3b6077" stroke-width="0.8" fill="none"/><circle cx="2.8" cy="3.6" r="0.6" fill="#2d4455"/></svg>
<div class="a" style="left:304px;top:83px;font-size:16px;line-height:20px;color:#f0f0f0;white-space:nowrap">GoodsBigbill.php</div>
<div class="a" style="left:467px;top:72px;width:255px;height:40px;border-right:1px solid #333"></div>
<svg class="a" style="left:481px;top:87px" width="15" height="11" viewBox="0 0 15 11"><path d="M0.8 5.5 C0.5 1.5 3 0.2 5.5 0.5 C6.5 0.6 7.2 1.2 7.5 1.8 C8 0.8 9.5 0.3 11 0.6 C13.5 1 14.8 3 14.5 6 L14 10.5 H12 L11.8 8 H9.5 L9.3 10.5 H7 L6.8 8.2 C5.8 8.2 5 8 4.5 7.5 L4.3 10.5 H2.8 L2.6 8.5 C1.5 7.8 0.9 6.8 0.8 5.5 Z" fill="#52809c"/><path d="M7.5 1.8 C7.2 3.8 6.2 5.3 3.8 6.2" stroke="#3b6077" stroke-width="0.8" fill="none"/><circle cx="2.8" cy="3.6" r="0.6" fill="#2d4455"/></svg>
<div class="a" style="left:506px;top:83px;font-size:16px;line-height:20px;color:#f0f0f0;white-space:nowrap">GoodsBigbillService.php</div>
<div class="a" style="left:722px;top:72px;width:236px;height:40px;border-right:1px solid #333"></div>
<svg class="a" style="left:736px;top:87px" width="15" height="11" viewBox="0 0 15 11"><path d="M0.8 5.5 C0.5 1.5 3 0.2 5.5 0.5 C6.5 0.6 7.2 1.2 7.5 1.8 C8 0.8 9.5 0.3 11 0.6 C13.5 1 14.8 3 14.5 6 L14 10.5 H12 L11.8 8 H9.5 L9.3 10.5 H7 L6.8 8.2 C5.8 8.2 5 8 4.5 7.5 L4.3 10.5 H2.8 L2.6 8.5 C1.5 7.8 0.9 6.8 0.8 5.5 Z" fill="#52809c"/><path d="M7.5 1.8 C7.2 3.8 6.2 5.3 3.8 6.2" stroke="#3b6077" stroke-width="0.8" fill="none"/><circle cx="2.8" cy="3.6" r="0.6" fill="#2d4455"/></svg>
<div class="a" style="left:761px;top:83px;font-size:16px;line-height:20px;color:#f0f0f0;white-space:nowrap">OrderServiceTrait.php</div>
<div class="a" style="left:722px;top:110px;width:236px;height:2px;background:#20a53a"></div>
<div class="a" style="left:928px;top:85px;width:14px;height:14px;border-radius:7px;background:#e8c21a;color:#333;font-size:11px;font-weight:bold;line-height:14px;text-align:center">!</div>
<div class="a" style="left:265px;top:112px;width:1218px;height:592px;background:#272822;overflow:hidden">
<div class="a" style="left:0;top:0;width:57px;height:592px;background:#2f3129"></div>
<div class="gn mono" style="top:-6px">429</div>
<div class="a" style="left:90.8px;top:-7px;width:1px;height:17px;background:#3b3a32"></div>
<div class="cl mono" style="left:61px;top:-6px"><span class="iv">········</span>\support\<span class="f" style="font-style:italic">Db</span><span class="k">::</span>beginTransaction();<span class="iv">¬</span></div>
<div class="gn mono" style="top:11px">430</div>
<svg class="a" style="left:47px;top:17px" width="7" height="5" viewBox="0 0 7 5"><path d="M0 0 H7 L3.5 4.5 Z" fill="#8f908a"/></svg>
<div class="a" style="left:90.8px;top:10px;width:1px;height:17px;background:#3b3a32"></div>
<div class="cl mono" style="left:61px;top:11px"><span class="iv">········</span><span class="k">try</span><span class="iv">·</span>{<span class="iv">¬</span></div>
<div class="gn mono" style="top:28px">431</div>
<div class="a" style="left:90.8px;top:27px;width:1px;height:17px;background:#3b3a32"></div>
<div class="a" style="left:121.6px;top:27px;width:1px;height:17px;background:#3b3a32"></div>
<div class="cl mono" style="left:61px;top:28px"><span class="iv">············</span><span class="c">################</span><span class="iv">¬</span></div>
<div class="gn mono" style="top:45px">432</div>
<div class="a" style="left:90.8px;top:44px;width:1px;height:17px;background:#3b3a32"></div>
<div class="a" style="left:121.6px;top:44px;width:1px;height:17px;background:#3b3a32"></div>
<div class="cl mono" style="left:61px;top:45px"><span class="iv">············</span><span class="v">$order</span><span class="k">-&gt;</span>uid<span class="iv">·</span><span class="k">=</span><span class="iv">·</span><span class="v">$user</span><span class="k">-&gt;</span>uid;<span class="iv">¬</span></div>
<div class="gn mono" style="top:62px">433</div>
<div class="a" style="left:90.8px;top:61px;width:1px;height:17px;background:#3b3a32"></div>
<div class="a" style="left:121.6px;top:61px;width:1px;height:17px;background:#3b3a32"></div>
<div class="cl mono" style="left:61px;top:62px"><span class="iv">············</span><span class="v">$order</span><span class="k">-&gt;</span>gid<span class="iv">·</span><span class="k">=</span><span class="iv">·</span><span class="v">$goods</span><span class="k">-&gt;</span>gid;<span class="iv">¬</span></div>
<div class="gn mono" style="top:79px">434</div>
<div class="a" style="left:90.8px;top:78px;width:1px;height:17px;background:#3b3a32"></div>
<div class="a" style="left:121.6px;top:78px;width:1px;height:17px;background:#3b3a32"></div>
<div class="cl mono" style="left:61px;top:79px"><span class="iv">············</span><span class="v">$order</span><span class="k">-&gt;</span>source<span class="iv">·</span><span class="k">=</span><span class="iv">·</span><span class="v">$source</span>;<span class="iv">¬</span></div>
<div class="gn mono" style="top:96px">435</div>
<div class="a" style="left:90.8px;top:95px;width:1px;height:17px;background:#3b3a32"></div>
<div class="a" style="left:121.6px;top:95px;width:1px;height:17px;background:#3b3a32"></div>
<div class="cl mono" style="left:61px;top:96px"><span class="iv">············</span><span class="v">$order</span><span class="k">-&gt;</span>order_sn<span class="iv">·</span><span class="k">=</span><span class="iv">·</span>__SYS_snow_id();<span class="iv">¬</span></div>
<div class="gn mono" style="top:113px">436</div>
<div class="a" style="left:90.8px;top:112px;width:1px;height:17px;background:#3b3a32"></div>
<div class="a" style="left:121.6px;top:112px;width:1px;height:17px;background:#3b3a32"></div>
<div class="cl mono" style="left:61px;top:113px"><span class="iv">············</span><span class="v">$order</span><span class="k">-&gt;</span>buy_time<span class="iv">·</span><span class="k">=</span><span class="iv">·</span><span class="f">date</span>(<span class="s">&#x27;Y-m-d</span><span class="iv">·</span><span class="s">H:i:s&#x27;</span>,<span class="iv">·</span><span class="f">time</span>());<span class="iv">¬</span></div>
<div class="gn mono" style="top:130px">437</div>
<div class="cl mono" style="left:61px;top:130px"><span class="iv">¬</span></div>
<div class="gn mono" style="top:147px">438</div>
<div class="a" style="left:90.8px;top:146px;width:1px;height:17px;background:#3b3a32"></div>
<div class="a" style="left:121.6px;top:146px;width:1px;height:17px;background:#3b3a32"></div>
<div class="cl mono" style="left:61px;top:147px"><span class="iv">············</span><span class="c">################</span><span class="iv">¬</span></div>
<div class="gn mono" style="top:164px">439</div>
<div class="a" style="left:90.8px;top:163px;width:1px;height:17px;background:#3b3a32"></div>
<div class="a" style="left:121.6px;top:163px;width:1px;height:17px;background:#3b3a32"></div>
<div class="cl mono" style="left:61px;top:164px"><span class="iv">············</span><span class="v">$_AMOUNT</span><span class="iv">·</span><span class="k">=</span><span class="iv">·</span>__SYS_math(<span class="v">$whichGoodsModel</span><span class="k">-&gt;</span>price,<span class="iv">·</span><span class="s">&#x27;*&#x27;</span>,<span class="iv">·</span><span class="v">$NUMBER</span>);<span class="iv">¬</span></div>
<div class="gn mono" style="top:181px">440</div>
<div class="a" style="left:90.8px;top:180px;width:1px;height:17px;background:#3b3a32"></div>
<div class="a" style="left:121.6px;top:180px;width:1px;height:17px;background:#3b3a32"></div>
<div class="cl mono" style="left:61px;top:181px"><span class="iv">············</span><span class="v">$_AMOUNT</span><span class="iv">·</span><span class="k">=</span><span class="iv">·</span>__SYS_math(<span class="v">$_AMOUNT</span>,<span class="iv">·</span><span class="s">&#x27;/&#x27;</span>,<span class="iv">·</span><span class="v">$ganggan</span>);<span class="iv">¬</span></div>
<div class="gn mono" style="top:198px">441</div>
<div class="a" style="left:90.8px;top:197px;width:1px;height:17px;background:#3b3a32"></div>
<div class="a" style="left:121.6px;top:197px;width:1px;height:17px;background:#3b3a32"></div>
<div class="cl mono" style="left:61px;top:198px"><span class="iv">············</span><span class="iv">¬</span></div>
<div class="gn mono" style="top:215px">442</div>
<div class="a" style="left:90.8px;top:214px;width:1px;height:17px;background:#3b3a32"></div>
<div class="a" style="left:121.6px;top:214px;width:1px;height:17px;background:#3b3a32"></div>
<div class="cl mono" style="left:61px;top:215px"><span class="iv">············</span><span class="iv">¬</span></div>
<div class="gn mono" style="top:232px">443</div>
<div class="a" style="left:90.8px;top:231px;width:1px;height:17px;background:#3b3a32"></div>
<div class="a" style="left:121.6px;top:231px;width:1px;height:17px;background:#3b3a32"></div>
<div class="cl mono" style="left:61px;top:232px"><span class="iv">············</span><span class="v">$_USER_PAY</span><span class="iv">·</span><span class="k">=</span><span class="iv">·</span><span class="v">$_AMOUNT</span>;<span class="iv">¬</span></div>
<div class="gn mono" style="top:249px">444</div>
<div class="a" style="left:90.8px;top:248px;width:1px;height:17px;background:#3b3a32"></div>
<div class="a" style="left:121.6px;top:248px;width:1px;height:17px;background:#3b3a32"></div>
<div class="cl mono" style="left:61px;top:249px"><span class="iv">············</span><span class="iv">¬</span></div>
<div class="gn mono" style="top:266px">445</div>
<div class="a" style="left:90.8px;top:265px;width:1px;height:17px;background:#3b3a32"></div>
<div class="a" style="left:121.6px;top:265px;width:1px;height:17px;background:#3b3a32"></div>
<div class="cl mono" style="left:61px;top:266px"><span class="iv">············</span><span class="iv">¬</span></div>
<div class="gn mono" style="top:283px">446</div>
<div class="a" style="left:90.8px;top:282px;width:1px;height:17px;background:#3b3a32"></div>
<div class="a" style="left:121.6px;top:282px;width:1px;height:17px;background:#3b3a32"></div>
<div class="cl mono" style="left:61px;top:283px"><span class="iv">············</span><span class="v">$_BUY_FEE</span><span class="iv">·</span><span class="k">=</span><span class="iv">·</span>__SYS_math(<span class="v">$_AMOUNT</span>,<span class="iv">·</span><span class="s">&#x27;*&#x27;</span>,<span class="iv">·</span><span class="v">$this</span><span class="k">-&gt;</span>feeRate);<span class="iv">¬</span></div>
<div class="gn mono" style="top:300px">447</div>
<div class="a" style="left:90.8px;top:299px;width:1px;height:17px;background:#3b3a32"></div>
<div class="a" style="left:121.6px;top:299px;width:1px;height:17px;background:#3b3a32"></div>
<div class="cl mono" style="left:61px;top:300px"><span class="iv">············</span><span class="iv">¬</span></div>
<div class="gn mono" style="top:317px">448</div>
<div class="a" style="left:90.8px;top:316px;width:1px;height:17px;background:#3b3a32"></div>
<div class="a" style="left:121.6px;top:316px;width:1px;height:17px;background:#3b3a32"></div>
<div class="cl mono" style="left:61px;top:317px"><span class="iv">············</span><span class="c">#######################</span><span class="iv">¬</span></div>
<div class="gn mono" style="top:334px">449</div>
<div class="a" style="left:90.8px;top:333px;width:1px;height:17px;background:#3b3a32"></div>
<div class="a" style="left:121.6px;top:333px;width:1px;height:17px;background:#3b3a32"></div>
<div class="cl mono" style="left:61px;top:334px"><span class="iv">············</span><span class="v">$big_buy</span><span class="iv">·</span><span class="k">=</span><span class="iv">·</span><span class="k">new</span><span class="iv">·</span>\app\api\model\OrderBuyBig();<span class="iv">¬</span></div>
<div class="a" style="left:0;top:350px;width:57px;height:17px;background:#272727"></div>
<div class="a" style="left:57px;top:350px;width:1161px;height:17px;background:#202020"></div>
<div class="gn mono" style="top:351px">450</div>
<div class="a" style="left:90.8px;top:350px;width:1px;height:17px;background:#3b3a32"></div>
<div class="a" style="left:121.6px;top:350px;width:1px;height:17px;background:#3b3a32"></div>
<div class="cl mono" style="left:61px;top:351px"><span class="iv">············</span><span class="v">$freeze_money</span><span class="iv">·</span><span class="k">=</span><span class="iv">·</span><span class="v">$big_buy</span><span class="k">-&gt;</span>where(<span class="s">&#x27;uid&#x27;</span>,<span class="v">$user</span><span class="k">-&gt;</span>uid)<span class="k">-&gt;</span>where(<span class="s">&#x27;admin_status&#x27;</span>,<span class="n">0</span>)<span class="k">-&gt;</span>sum(<span class="s">&#x27;user_pay&#x27;</span>);<span class="iv">¬</span></div>
<div class="gn mono" style="top:368px">451</div>
<svg class="a" style="left:47px;top:374px" width="7" height="5" viewBox="0 0 7 5"><path d="M0 0 H7 L3.5 4.5 Z" fill="#8f908a"/></svg>
<div class="a" style="left:90.8px;top:367px;width:1px;height:17px;background:#3b3a32"></div>
<div class="a" style="left:121.6px;top:367px;width:1px;height:17px;background:#3b3a32"></div>
<div class="cl mono" style="left:61px;top:368px"><span class="iv">············</span><span class="k">if</span><span class="iv">·</span>(__SYS_math(<span class="v">$user</span><span class="k">-&gt;</span>money,<span class="iv">·</span><span class="s">&#x27;-&#x27;</span>,<span class="iv">·</span><span class="v">$freeze_money</span>)<span class="iv">·</span><span class="k">&lt;</span><span class="iv">··</span>__SYS_math(<span class="v">$_AMOUNT</span>,<span class="iv">·</span><span class="s">&#x27;+&#x27;</span>,<span class="iv">·</span><span class="v">$_BUY_FEE</span>))<span class="iv">·</span>{<span class="iv">¬</span></div>
<div class="gn mono" style="top:385px">452</div>
<div class="a" style="left:90.8px;top:384px;width:1px;height:17px;background:#3b3a32"></div>
<div class="a" style="left:121.6px;top:384px;width:1px;height:17px;background:#3b3a32"></div>
<div class="a" style="left:152.4px;top:384px;width:1px;height:17px;background:#3b3a32"></div>
<div class="cl mono" style="left:61px;top:385px"><span class="iv">················</span><span class="c">//</span><span class="iv">·</span><span class="c">throw</span><span class="iv">·</span><span class="c">new</span><span class="iv">·</span><span class="c">\Exception(&#x27;Insufficient</span><span class="iv">·</span><span class="c">balance&#x27;);</span><span class="iv">¬</span></div>
<div class="gn mono" style="top:402px">453</div>
<div class="a" style="left:90.8px;top:401px;width:1px;height:17px;background:#3b3a32"></div>
<div class="a" style="left:121.6px;top:401px;width:1px;height:17px;background:#3b3a32"></div>
<div class="a" style="left:152.4px;top:401px;width:1px;height:17px;background:#3b3a32"></div>
<div class="cl mono" style="left:61px;top:402px"><span class="iv">················</span><span class="k">throw</span><span class="iv">·</span><span class="k">new</span><span class="iv">·</span>\Exception(<span class="s">&#x27;잔액</span><span class="iv">·</span><span class="s">부족&#x27;</span>);<span class="iv">¬</span></div>
<div class="gn mono" style="top:419px">454</div>
<div class="a" style="left:90.8px;top:418px;width:1px;height:17px;background:#3b3a32"></div>
<div class="a" style="left:121.6px;top:418px;width:1px;height:17px;background:#3b3a32"></div>
<div class="cl mono" style="left:61px;top:419px"><span class="iv">············</span>}<span class="iv">¬</span></div>
<div class="gn mono" style="top:436px">455</div>
<div class="cl mono" style="left:61px;top:436px"><span class="iv">¬</span></div>
<div class="gn mono" style="top:453px">456</div>
<div class="a" style="left:90.8px;top:452px;width:1px;height:17px;background:#3b3a32"></div>
<div class="a" style="left:121.6px;top:452px;width:1px;height:17px;background:#3b3a32"></div>
<div class="cl mono" style="left:61px;top:453px"><span class="iv">············</span><span class="c">####################################</span><span class="iv">¬</span></div>
<div class="gn mono" style="top:470px">457</div>
<div class="a" style="left:90.8px;top:469px;width:1px;height:17px;background:#3b3a32"></div>
<div class="a" style="left:121.6px;top:469px;width:1px;height:17px;background:#3b3a32"></div>
<div class="cl mono" style="left:61px;top:470px"><span class="iv">············</span><span class="v">$_DESC</span><span class="iv">·</span><span class="k">=</span><span class="iv">·</span><span class="v">$this</span><span class="k">-&gt;</span>__BUY_desc(<span class="v">$whichGoodsModel</span>,<span class="iv">·</span><span class="v">$_USER_PAY</span>,<span class="iv">·</span><span class="v">$_BUY_FEE</span>);<span class="iv">¬</span></div>
<div class="gn mono" style="top:487px">458</div>
<div class="a" style="left:90.8px;top:486px;width:1px;height:17px;background:#3b3a32"></div>
<div class="a" style="left:121.6px;top:486px;width:1px;height:17px;background:#3b3a32"></div>
<div class="cl mono" style="left:61px;top:487px"><span class="iv">············</span><span class="v">$order</span><span class="k">-&gt;</span>desc<span class="iv">·</span><span class="k">=</span><span class="iv">·</span><span class="v">$_DESC</span>;<span class="iv">¬</span></div>
<div class="gn mono" style="top:504px">459</div>
<div class="a" style="left:90.8px;top:503px;width:1px;height:17px;background:#3b3a32"></div>
<div class="a" style="left:121.6px;top:503px;width:1px;height:17px;background:#3b3a32"></div>
<div class="cl mono" style="left:61px;top:504px"><span class="iv">············</span><span class="c">################</span><span class="iv">¬</span></div>
<div class="gn mono" style="top:521px">460</div>
<div class="cl mono" style="left:61px;top:521px"><span class="iv">¬</span></div>
<div class="gn mono" style="top:538px">461</div>
<div class="a" style="left:90.8px;top:537px;width:1px;height:17px;background:#3b3a32"></div>
<div class="a" style="left:121.6px;top:537px;width:1px;height:17px;background:#3b3a32"></div>
<div class="cl mono" style="left:61px;top:538px"><span class="iv">············</span><span class="c">//</span><span class="iv">·</span><span class="c">@TODO</span><span class="iv">¬</span></div>
<div class="gn mono" style="top:555px">462</div>
<svg class="a" style="left:47px;top:561px" width="7" height="5" viewBox="0 0 7 5"><path d="M0 0 H7 L3.5 4.5 Z" fill="#8f908a"/></svg>
<div class="a" style="left:90.8px;top:554px;width:1px;height:17px;background:#3b3a32"></div>
<div class="a" style="left:121.6px;top:554px;width:1px;height:17px;background:#3b3a32"></div>
<div class="cl mono" style="left:61px;top:555px"><span class="iv">············</span><span class="k">if</span><span class="iv">·</span>(<span class="v">$order</span><span class="k">-&gt;</span>save())<span class="iv">·</span>{<span class="iv">¬</span></div>
<div class="gn mono" style="top:572px">463</div>
<div class="cl mono" style="left:61px;top:572px"><span class="iv">¬</span></div>
<div class="gn mono" style="top:589px">464</div>
<div class="a" style="left:90.8px;top:588px;width:1px;height:17px;background:#3b3a32"></div>
<div class="a" style="left:121.6px;top:588px;width:1px;height:17px;background:#3b3a32"></div>
<div class="a" style="left:152.4px;top:588px;width:1px;height:17px;background:#3b3a32"></div>
<div class="cl mono" style="left:61px;top:589px"><span class="iv">················</span><span class="v">$order</span><span class="k">-&gt;</span>desc<span class="iv">·</span><span class="k">=</span><span class="iv">·</span><span class="v">$_DESC</span>;<span class="iv">¬</span></div>
<div class="a" style="left:861.8px;top:352px;width:2px;height:15px;background:#f8f8f0"></div>
</div>
<div class="a" style="left:264px;top:343px;width:14px;height:48px;background:#1e1e1e;border-radius:0 8px 8px 0;border:1px solid #3a3a3a;border-left:none"></div>
<svg class="a" style="left:266px;top:361px" width="8" height="12" viewBox="0 0 8 12"><path d="M6 1.5 L1.8 6 L6 10.5" stroke="#ddd" stroke-width="2" fill="none"/></svg>
<div class="a" style="left:413px;top:458px;width:753px;height:97px;border:2px solid #e5252d"></div>
<div class="a" style="left:1483px;top:112px;width:15px;height:592px;background:#333"></div>
<div class="a" style="left:1483px;top:391px;width:15px;height:23px;background:#7c7c7c"></div>
<div class="a" style="left:1107px;top:112px;width:376px;height:57px;background:#dddddd;border-radius:0 0 0 5px;box-shadow:0 0 5px rgba(0,0,0,.4)"></div>
<div class="a" style="left:1114px;top:117px;width:343px;height:26px;background:#fff;border-radius:3px"></div>
<div class="a" style="left:1121px;top:121px;font-size:13px;line-height:17px;color:#000">__BUY_BG</div>
<div class="a" style="left:1363px;top:117px;width:1px;height:26px;background:#e0e0e0"></div>
<div class="a" style="left:1392px;top:117px;width:1px;height:26px;background:#e0e0e0"></div>
<div class="a" style="left:1420px;top:117px;width:1px;height:26px;background:#e0e0e0"></div>
<svg class="a" style="left:1373px;top:125px" width="8" height="11" viewBox="0 0 8 11"><path d="M6 1 L1.5 5.5 L6 10" stroke="#555" stroke-width="1.3" fill="none"/></svg>
<svg class="a" style="left:1403px;top:125px" width="8" height="11" viewBox="0 0 8 11"><path d="M2 1 L6.5 5.5 L2 10" stroke="#555" stroke-width="1.3" fill="none"/></svg>
<div class="a mono" style="left:1426px;top:122px;font-size:13px;line-height:16px;color:#777">All</div>
<svg class="a" style="left:1464px;top:123px" width="10" height="10" viewBox="0 0 10 10"><path d="M1.5 1.5 L8.5 8.5 M8.5 1.5 L1.5 8.5" stroke="#555" stroke-width="1.8"/></svg>
<div class="a" style="left:1115px;top:146px;width:20px;height:19px;border:1px solid #c8c8c8;background:#e4e4e4"></div>
<div class="a" style="left:1120px;top:147px;font-size:14px;line-height:16px;color:#444">+</div>
<div class="a" style="left:1143px;top:148px;font-size:13px;line-height:16px;color:#555">2 of 2</div>
<div class="a mono" style="left:1401px;top:146px;width:19px;height:19px;border:1px solid #c8c8c8;background:#e2e2e2;font-size:12px;line-height:17px;color:#444;text-align:center">.*</div>
<div class="a mono" style="left:1422px;top:146px;width:19px;height:19px;border:1px solid #c8c8c8;background:#e2e2e2;font-size:12px;line-height:17px;color:#444;text-align:center">Aa</div>
<div class="a mono" style="left:1443px;top:146px;width:20px;height:19px;border:1px solid #c8c8c8;background:#e2e2e2;font-size:12px;line-height:17px;color:#444;text-align:center">\b</div>
<div class="a mono" style="left:1465px;top:146px;width:12px;height:19px;border:1px solid #c8c8c8;background:#e2e2e2;font-size:12px;line-height:17px;color:#444;text-align:center">S</div>
<div class="a" style="left:265px;top:704px;width:1233px;height:35px;background:#474747"></div>
<div class="a" style="left:280px;top:714px;font-size:14px;line-height:17px;color:#fff;white-space:nowrap">文件位置：</div>
<div class="a" style="left:345px;top:714px;font-size:14.5px;line-height:17px;color:#fff;white-space:nowrap">/www/wwwroot/api.dgbstock.top/app/api/service/traits/OrderServiceTrait.php</div>
<div class="a" style="left:1092px;top:704px;width:1px;height:35px;background:#3a3a3a"></div>
<div class="a" style="left:1201px;top:704px;width:1px;height:35px;background:#3a3a3a"></div>
<div class="a" style="left:1278px;top:704px;width:1px;height:35px;background:#3a3a3a"></div>
<div class="a" style="left:1386px;top:704px;width:1px;height:35px;background:#3a3a3a"></div>
<div class="a" style="left:1482px;top:704px;width:1px;height:35px;background:#3a3a3a"></div>
<div class="a" style="left:981px;top:714px;font-size:14px;line-height:17px;color:#fff;white-space:nowrap">行 450 ,列 104</div>
<div class="a" style="left:1107px;top:714px;font-size:13.2px;line-height:17px;color:#fff;white-space:nowrap">历史版本：无</div>
<div class="a" style="left:1216px;top:714px;font-size:13.2px;line-height:17px;color:#fff;white-space:nowrap">空格：4</div>
<div class="a" style="left:1294px;top:714px;font-size:13.2px;line-height:17px;color:#fff;white-space:nowrap">编码：UTF-8</div>
<div class="a" style="left:1402px;top:714px;font-size:13.2px;line-height:17px;color:#fff;white-space:nowrap">语言：PHP</div>
</div>
<div class="a" style="left:1837px;top:704px;width:40px;height:150px;background:#fff;border-radius:6px;box-shadow:0 0 6px rgba(0,0,0,.12)"></div>
<svg class="a" style="left:1847px;top:715px" width="16" height="16" viewBox="0 0 16 16"><path d="M2.5 8 A5.5 5.5 0 0 1 13.5 8" stroke="#20a53a" stroke-width="1.8" fill="none"/><path d="M4 7 Q8 3 12 7 Q12 4.5 8 4 Q4 4.5 4 7 Z" fill="#20a53a"/><circle cx="8" cy="8.6" r="4" stroke="#20a53a" stroke-width="1.2" fill="none"/><rect x="1.5" y="7" width="2.6" height="4.2" rx="1" fill="#20a53a"/><rect x="11.9" y="7" width="2.6" height="4.2" rx="1" fill="#20a53a"/><path d="M13 11 Q12 14.5 8.5 14.5" stroke="#20a53a" stroke-width="1" fill="none"/></svg>
<div class="a" style="left:1848px;top:748px;font-size:14px;line-height:17px;color:#20a53a">服</div>
<svg class="a" style="left:1847px;top:790px" width="15" height="15" viewBox="0 0 15 15"><path d="M7 1.5 H1.5 V13.5 H13.5 V8" stroke="#20a53a" stroke-width="1.3" fill="none"/><path d="M12 1.5 L14 3.5 L8 9.5 L5.5 10 L6 7.5 Z" stroke="#20a53a" stroke-width="1.3" fill="none"/></svg>
<div class="a" style="left:1848px;top:809px;font-size:14px;line-height:17px;color:#20a53a;width:16px">评价</div>
<div class="a" style="left:1723px;top:731px;width:152px;height:30px;background:#f8fafd;border:1px solid #9fb5d3;border-radius:3px"></div>
<svg class="a" style="left:1727px;top:731px" width="34" height="32" viewBox="0 0 34 32"><rect x="3" y="3" width="27" height="26" rx="5" fill="#f05a22" transform="rotate(-12 16.5 16)"/><path d="M22 9.5 Q14 7 10.5 11 Q9 14.5 15 15.5 Q21 16.5 19.5 20 Q16 23.5 9 21" stroke="#fff" stroke-width="3.4" fill="none" stroke-linecap="round"/></svg>
<div class="a" style="left:1765px;top:732px;width:1px;height:28px;background:#f6b49c"></div>
<div class="a" style="left:1768px;top:732px;width:1px;height:28px;background:#f6b49c"></div>
<div class="a" style="left:1775px;top:737px;font-size:15px;line-height:18px;color:#1f63c6;font-weight:bold;-webkit-text-stroke:0.4px #1f63c6">英</div>
<div class="a" style="left:1800px;top:735px;font-size:15px;line-height:18px;color:#1f63c6;font-weight:bold">·,</div>
<svg class="a" style="left:1822px;top:737px" width="18" height="18" viewBox="0 0 18 18"><circle cx="9" cy="9" r="7.8" stroke="#1f63c6" stroke-width="1.6" fill="none"/><circle cx="6.3" cy="7" r="1" fill="#1f63c6"/><circle cx="11.7" cy="7" r="1" fill="#1f63c6"/><path d="M5.5 10.5 Q9 14 12.5 10.5" stroke="#1f63c6" stroke-width="1.4" fill="none"/></svg>
<svg class="a" style="left:1847px;top:737px" width="18" height="18" viewBox="0 0 18 18"><path d="M12 1.5 L16.5 6 L7 15.5 H2.5 V11 Z M9.5 4 L14 8.5" stroke="#1f63c6" stroke-width="2" fill="none" stroke-linejoin="round"/></svg></body></html>
